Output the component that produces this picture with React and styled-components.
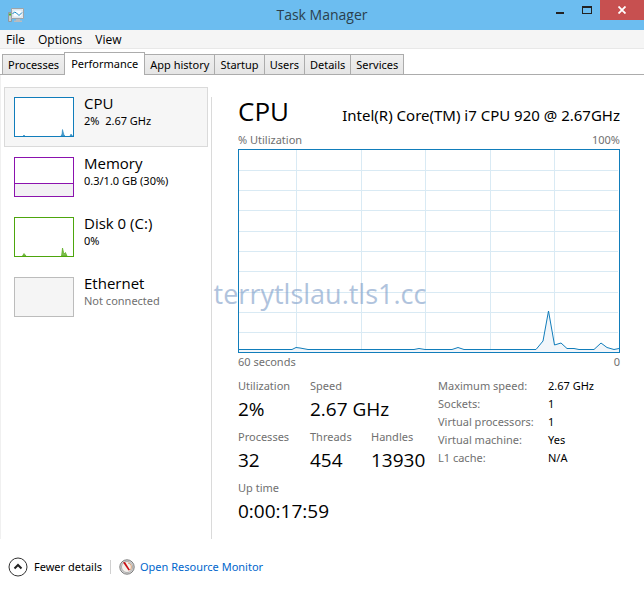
import { useState } from 'react';
import styled, { createGlobalStyle } from 'styled-components';

const headingFont = "'Open Sans', 'Noto Sans', sans-serif";

const GlobalStyle = createGlobalStyle`
  * {
    box-sizing: border-box;
  }

  body {
    margin: 0;
    background: #fff;
    color: #000;
    font-family: 'Noto Sans', 'Open Sans', sans-serif;
    font-size: 11px;
    line-height: 18px;
  }

  button {
    margin: 0;
    padding: 0;
    border: 0;
    background: none;
    color: inherit;
    font: inherit;
    text-align: left;
  }
`;

const Window = styled.div`
  position: relative;
  min-height: 100vh;
  display: flex;
  flex-direction: column;
`;

const TitleBar = styled.header`
  display: grid;
  grid-template-columns: 1fr auto 1fr;
  height: 30px;
  background: #6cbdf0;

  svg {
    display: block;
  }
`;

const AppIcon = styled.div`
  padding: 7px 8px;
`;

const Title = styled.h1`
  margin: 0;
  color: #2b3f4d;
  font-family: ${headingFont};
  font-size: 14px;
  font-weight: 400;
  line-height: 30px;
`;

const WindowButtons = styled.div`
  display: flex;
  justify-content: flex-end;
`;

const WindowButton = styled.button`
  display: flex;
  align-items: center;
  justify-content: center;
  width: ${(props) => (props.$close ? '44px' : '27px')};
  height: 20px;
  background: ${(props) => (props.$close ? '#c75050' : 'transparent')};
`;

const MenuBar = styled.nav`
  display: flex;
  gap: 13px;
  height: 19px;
  padding: 0 6px;
  background: #f5f5f5;
  border-bottom: 1px solid #e8e8e8;
  font-family: ${headingFont};
  font-size: 12px;
  line-height: 20px;
`;

const TabBar = styled.div`
  display: flex;
  align-items: flex-end;
  height: 26px;
  padding-left: 2px;
  border-bottom: 1px solid #acacac;
`;

const Tab = styled.button`
  height: ${(props) => (props.$active ? '23px' : '20px')};
  margin: 0 0 ${(props) => (props.$active ? '-1px' : '0')} -1px;
  padding: 0 ${(props) => (props.$active ? '6px' : '5px')};
  border: 1px solid #acacac;
  border-bottom: 0;
  background: ${(props) =>
    props.$active ? '#fff' : 'linear-gradient(#f0f0f0, #e5e5e5)'};

  &:first-child {
    margin-left: 0;
  }
`;

const Content = styled.div`
  display: flex;
  padding: 12px 24px 0 3px;
  border-left: 1px solid #f0f0f0;
`;

const Sidebar = styled.aside`
  flex: 0 0 204px;
`;

const Resource = styled.button`
  display: flex;
  gap: 10px;
  width: 100%;
  height: 60px;
  padding: 9px;
  border: 1px solid ${(props) => (props.$active ? '#dadada' : 'transparent')};
  background: ${(props) => (props.$active ? '#f6f6f6' : 'transparent')};
`;

const Thumb = styled.svg`
  flex: none;
  width: 60px;
  height: 40px;
  border: 1px solid ${(props) => props.$color};
  background: ${(props) => (props.$off ? '#f5f5f5' : '#fff')};
`;

const ResourceName = styled.span`
  display: block;
  margin-top: -4px;
  font-family: ${headingFont};
  font-size: 15px;
  line-height: 20px;
`;

const ResourceInfo = styled.span`
  display: block;
  color: ${(props) => (props.$muted ? '#707070' : '#000')};
  line-height: 16px;
  white-space: pre;
`;

const Details = styled.main`
  flex: 1;
  min-width: 0;
  min-height: 442px;
  margin: 10px 0 0 3px;
  padding-left: 26px;
  border-left: 1px solid #dadada;
`;

const Heading = styled.div`
  display: flex;
  align-items: baseline;
  justify-content: space-between;
  height: 34px;
`;

const ResourceTitle = styled.h2`
  margin: 0;
  font-family: ${headingFont};
  font-size: 26px;
  font-weight: 400;
  line-height: 28px;
`;

const Model = styled.span`
  font-size: 15px;
`;

const ChartLabels = styled.div`
  display: flex;
  justify-content: space-between;
  color: #707070;
`;

const Chart = styled.svg`
  display: block;
  width: 100%;
  height: 204px;
  border: 1px solid #117dbb;
`;

const Stats = styled.div`
  display: flex;
  padding-top: 6px;
`;

const Counters = styled.dl`
  display: grid;
  grid-template-columns: 72px 61px 67px;
  margin: 0;
`;

const Counter = styled.div`
  grid-column: span ${(props) => props.$span || 1};
  height: 51px;
  white-space: nowrap;

  dt {
    color: #707070;
  }

  dd {
    margin: 0;
    font-family: ${headingFont};
    font-size: 19px;
    line-height: 28px;
  }
`;

const Specs = styled.dl`
  display: grid;
  grid-template-columns: 110px auto;
  align-content: start;
  margin: 0;
  white-space: nowrap;

  dt {
    color: #707070;
  }

  dd {
    margin: 0;
  }
`;

const Footer = styled.footer`
  display: flex;
  align-items: center;
  padding: 18px 8px 0;
`;

const FooterButton = styled.button`
  display: flex;
  align-items: center;
  gap: 6px;
  padding-right: 8px;
`;

const MonitorLink = styled.a`
  display: flex;
  align-items: center;
  gap: 5px;
  padding-left: 8px;
  color: #0066cc;
  text-decoration: none;
`;

const Separator = styled.span`
  width: 1px;
  height: 14px;
  background: #d0d0d0;
`;

const Watermark = styled.div`
  position: absolute;
  inset: 0;
  display: flex;
  align-items: center;
  justify-content: center;
  padding: 0 4px 4px 0;
  color: #7c9cc8;
  font-family: ${headingFont};
  font-size: 27px;
  opacity: 0.6;
  pointer-events: none;
`;

const tabs = [
  'Processes',
  'Performance',
  'App history',
  'Startup',
  'Users',
  'Details',
  'Services',
];

const counters = [
  { label: 'Utilization', value: '2%' },
  { label: 'Speed', value: '2.67 GHz', span: 2 },
  { label: 'Processes', value: '32' },
  { label: 'Threads', value: '454' },
  { label: 'Handles', value: '13930' },
  { label: 'Up time', value: '0:00:17:59', span: 3 },
];

const specs = [
  ['Maximum speed:', '2.67 GHz'],
  ['Sockets:', '1'],
  ['Virtual processors:', '1'],
  ['Virtual machine:', 'Yes'],
  ['L1 cache:', 'N/A'],
];

const resources = [
  {
    name: 'CPU',
    info: '2%  2.67 GHz',
    color: '#117dbb',
    graph: (
      <path
        d="M8 38l1-.7 1 .7zM46 38l1-2 .5-4.500 1.500 5.500 1 1zM55 38l1-2 1.500 2z"
        fill="#4f9fcd"
        stroke="#117dbb"
        strokeWidth="0.5"
      />
    ),
  },
  {
    name: 'Memory',
    info: '0.3/1.0 GB (30%)',
    color: '#8b12ae',
    graph: (
      <>
        <rect y="26" width="58" height="12" fill="#f2f0f4" />
        <path d="M0 25.500h58" stroke="#8b12ae" />
      </>
    ),
  },
  {
    name: 'Disk 0 (C:)',
    info: '0%',
    color: '#4da60c',
    graph: (
      <path
        d="M7.500 38l1.500-2.500 2 2.500zM46.500 38l1-8 1.500 6 1.500-1.500 1.500 3.500z"
        fill="#7fbf50"
        stroke="#4da60c"
        strokeWidth="0.6"
      />
    ),
  },
  { name: 'Ethernet', info: 'Not connected', color: '#bcbcbc', off: true },
];

const cpuLine =
  'M0 199.500L53 199.500L57 197.500L61 198L69 199.500L175 199.500L180 198.500L186 199.500L213 199.500L219 197.500L225 199.500L297 199.500L304 191L309.500 161L315.500 195L322 193L328 198.500L335 198.500L340 199.500L355 199.500L362 193L368 197.500L375 199.500L380 198.500';

function CpuChart() {
  const columns = [57.5, 122.5, 186.5, 251.5, 315.5];
  const rows = [20.5, 40.5, 60.5, 81.5, 101.5, 121.5, 142.5, 162.5, 182.5];

  return (
    <Chart
      viewBox="0 0 380 202"
      preserveAspectRatio="none"
      role="img"
      aria-label="% Utilization"
    >
      <g stroke="#d9eaf4">
        {columns.map((x) => (
          <path key={x} d={`M${x} 0V202`} />
        ))}
        {rows.map((y) => (
          <path key={y} d={`M0 ${y}H379`} />
        ))}
      </g>
      <path d={`${cpuLine}V202H0Z`} fill="#f1f5fa" fillOpacity="0.9" />
      <path d={cpuLine} fill="none" stroke="#117dbb" />
    </Chart>
  );
}

function TaskManagerIcon() {
  return (
    <svg width="16" height="16" viewBox="0 0 16 16">
      <path d="M0.500 5.500h3v9h-3z" fill="#c9cdd0" stroke="#8d9aa3" />
      <path d="M1 6.500h2v2h-2z" fill="#45b52c" />
      <path d="M3.500 1.500h12v10h-12z" fill="#e9edf0" stroke="#9da4a9" />
      <path d="M5 3h9v7H5z" fill="#f8fcff" stroke="#b9d3e3" strokeWidth="0.5" />
      <path d="M4.500 7l2-2 2 1 2.500 2.500 3-3" fill="none" stroke="#1687c4" />
      <path d="M8 12h4v1.500h2V15H6v-1.500h2z" fill="#b8bcc0" />
    </svg>
  );
}

function MonitorIcon() {
  return (
    <svg width="16" height="16" viewBox="0 0 16 16">
      <circle cx="8" cy="8" r="7.200" fill="#d5d5d5" stroke="#7d7d7d" />
      <circle cx="8" cy="8" r="5.500" fill="#f5f1ed" stroke="#969696" strokeWidth="0.7" />
      <path d="M9 4a4 4 0 0 1 2 7" fill="none" stroke="#dda277" />
      <path d="M4 3.500l2-.5 5 8-1.500.5z" fill="#c80d12" />
    </svg>
  );
}

function App() {
  const [activeTab, setActiveTab] = useState('Performance');
  const [activeResource, setActiveResource] = useState('CPU');

  return (
    <>
      <GlobalStyle />
      <Window>
        <TitleBar>
          <AppIcon>
            <TaskManagerIcon />
          </AppIcon>
          <Title>Task Manager</Title>
          <WindowButtons>
            <WindowButton aria-label="Minimize">
              <svg width="10" height="10" viewBox="0 0 10 10">
                <path d="M1 7h8v2H1z" fill="#222" />
              </svg>
            </WindowButton>
            <WindowButton aria-label="Maximize">
              <svg width="10" height="8" viewBox="0 0 10 8">
                <path d="M0 0h10v8H0zM1 2v5h8V2z" fill="#222" fillRule="evenodd" />
              </svg>
            </WindowButton>
            <WindowButton $close aria-label="Close">
              <svg width="8" height="8" viewBox="0 0 8 8">
                <path d="M0.500 0.500l7 7M7.500 0.500l-7 7" stroke="#fff" strokeWidth="1.800" />
              </svg>
            </WindowButton>
          </WindowButtons>
        </TitleBar>

        <MenuBar>
          <button>File</button>
          <button>Options</button>
          <button>View</button>
        </MenuBar>

        <TabBar role="tablist">
          {tabs.map((tab) => (
            <Tab
              key={tab}
              role="tab"
              aria-selected={tab === activeTab}
              $active={tab === activeTab}
              onClick={() => setActiveTab(tab)}
            >
              {tab}
            </Tab>
          ))}
        </TabBar>

        <Content>
          <Sidebar>
            {resources.map(({ name, info, color, graph, off }) => (
              <Resource
                key={name}
                $active={name === activeResource}
                onClick={() => setActiveResource(name)}
              >
                <Thumb $color={color} $off={off} viewBox="0 0 58 38">
                  {graph}
                </Thumb>
                <span>
                  <ResourceName>{name}</ResourceName>
                  <ResourceInfo $muted={off}>{info}</ResourceInfo>
                </span>
              </Resource>
            ))}
          </Sidebar>

          <Details>
            <Heading>
              <ResourceTitle>CPU</ResourceTitle>
              <Model>Intel(R) Core(TM) i7 CPU 920 @ 2.67GHz</Model>
            </Heading>
            <ChartLabels>
              <span>% Utilization</span>
              <span>100%</span>
            </ChartLabels>
            <CpuChart />
            <ChartLabels>
              <span>60 seconds</span>
              <span>0</span>
            </ChartLabels>
            <Stats>
              <Counters>
                {counters.map(({ label, value, span }) => (
                  <Counter key={label} $span={span}>
                    <dt>{label}</dt>
                    <dd>{value}</dd>
                  </Counter>
                ))}
              </Counters>
              <Specs>
                {specs.map(([label, value]) => [
                  <dt key={label}>{label}</dt>,
                  <dd key={label + value}>{value}</dd>,
                ])}
              </Specs>
            </Stats>
          </Details>
        </Content>

        <Footer>
          <FooterButton>
            <svg width="20" height="20" viewBox="0 0 20 20">
              <circle cx="10" cy="10" r="9" fill="#fff" stroke="#333" />
              <path d="M6.500 11.500L10 8l3.500 3.500" fill="none" stroke="#222" strokeWidth="2" />
            </svg>
            Fewer details
          </FooterButton>
          <Separator />
          <MonitorLink href="#resource-monitor">
            <MonitorIcon />
            Open Resource Monitor
          </MonitorLink>
        </Footer>

        <Watermark>terrytlslau.tls1.cc</Watermark>
      </Window>
    </>
  );
}

export default App;
